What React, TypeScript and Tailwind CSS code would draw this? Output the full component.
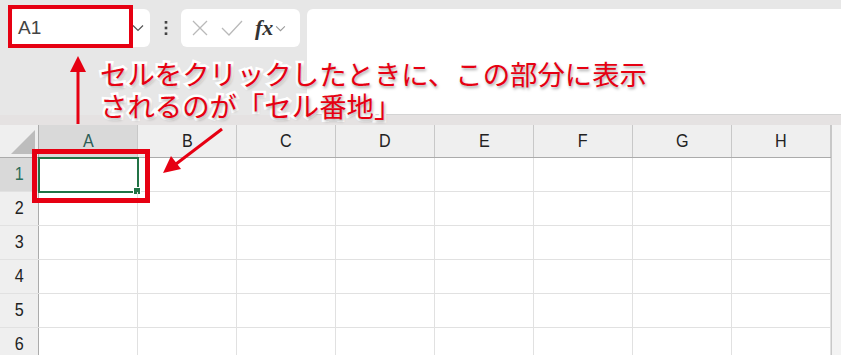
import React from 'react'

const COLS = ['A', 'B', 'C', 'D', 'E', 'F', 'G', 'H']
const ROWS = [1, 2, 3, 4, 5, 6]

function Chevron({ className }: { className?: string }) {
  return (
    <svg viewBox="0 0 12 8" className={className} fill="none" stroke="currentColor" strokeWidth="1.2">
      <path d="M1 1.5 L6 6.5 L11 1.5" />
    </svg>
  )
}

export default function App() {
  return (
    <div className="relative w-[841px] h-[355px] overflow-hidden bg-[#e7e7e7] font-['Noto_Sans_CJK_JP','Liberation_Sans',sans-serif]">
      {/* Formula bar */}
      <div className="flex items-start h-[115px] pt-[9px] pl-[10px]">
        <div className="flex items-center w-[140px] h-[38px] bg-white rounded-md pl-[8px] pr-[6px]">
          <span className="flex-1 text-[19px] text-[#444] font-['Liberation_Sans',sans-serif]">A1</span>
          <Chevron className="w-[12px] h-[8px] text-[#555]" />
        </div>
        <div className="w-[31px] h-[38px] flex items-center justify-center">
          <svg viewBox="0 0 4 16" className="w-[4px] h-[14px] text-[#444]" fill="currentColor">
            <rect x="0.5" y="0" width="3" height="3" />
            <rect x="0.5" y="6.5" width="3" height="3" />
            <rect x="0.5" y="13" width="3" height="3" />
          </svg>
        </div>
        <div className="flex items-center w-[119px] h-[38px] bg-white rounded-md pl-[10px] pr-[6px] gap-[12px]">
          <svg viewBox="0 0 18 18" className="w-[18px] h-[18px] text-[#b9b9b9]" fill="none" stroke="currentColor" strokeWidth="1.3">
            <path d="M2 2 L16 16 M16 2 L2 16" />
          </svg>
          <svg viewBox="0 0 22 18" className="w-[22px] h-[18px] text-[#b9b9b9]" fill="none" stroke="currentColor" strokeWidth="1.3">
            <path d="M1 9 L8 16 L21 2" />
          </svg>
          <span className="text-[22px] italic font-bold text-[#333] font-['Liberation_Serif',serif] leading-none">fx</span>
          <Chevron className="w-[11px] h-[7px] -ml-[10px] text-[#999]" />
        </div>
        <div className="ml-[7px] flex-1 h-[106px] bg-white rounded-l-md border-b border-[#d4d4d4]" />
      </div>

      {/* Band above headers */}
      <div className="h-[10px] bg-[#e5e2e2]" />

      {/* Grid */}
      <div className="flex">
        <div className="w-[831px] bg-white">
          <div className="flex h-[33px] bg-[#efefef] border-b border-[#ababab]">
            <div className="w-[39px] border-r border-[#ababab] flex items-end justify-end p-[3px]">
              <svg viewBox="0 0 24 24" className="w-[24px] h-[24px]">
                <path d="M24 0 L24 24 L0 24 Z" fill="#bdbdbd" />
              </svg>
            </div>
            {COLS.map((c, i) => (
              <div
                key={c}
                className={
                  i === 0
                    ? 'w-[99px] flex items-center justify-center border-r border-[#c8c8c8] bg-[#d9d9d9] text-[19px] text-[#2d5e58] font-["Liberation_Sans",sans-serif]'
                    : 'w-[99px] flex items-center justify-center border-r border-[#c8c8c8] text-[19px] text-[#222] font-["Liberation_Sans",sans-serif]'
                }
              >
                <span className="inline-block scale-x-[0.85]">{c}</span>
              </div>
            ))}
          </div>
          {ROWS.map((r) => (
            <div key={r} className="flex h-[34px] border-b border-[#e1e1e1]">
              <div
                className={
                  r === 1
                    ? 'w-[39px] flex items-center justify-center bg-[#d9d9d9] border-r border-[#ababab] text-[19px] text-[#2d6e5a] font-["Liberation_Sans",sans-serif]'
                    : 'w-[39px] flex items-center justify-center bg-[#efefef] border-r border-[#ababab] text-[19px] text-[#222] font-["Liberation_Sans",sans-serif]'
                }
              >
                <span className="inline-block scale-x-[0.85]">{r}</span>
              </div>
              {COLS.map((c, i) => (
                <div key={c} className="relative w-[99px] border-r border-[#e1e1e1]">
                  {r === 1 && i === 0 && (
                    <div className="absolute -left-[1px] -top-[1px] w-[101px] h-[36px] border-2 border-[#217346]">
                      <div className="absolute -right-[4px] -bottom-[4px] w-[6px] h-[6px] bg-[#217346] border border-white box-content" />
                    </div>
                  )}
                </div>
              ))}
            </div>
          ))}
        </div>
        <div className="flex-1 border-l border-[#c8c8c8] bg-[#f3f3f3]" />
      </div>

      {/* Annotation overlays */}
      <div className="absolute left-[8px] top-[5px] w-[125px] h-[43px] border-4 border-[#e60012]" />
      <div className="absolute left-[32px] top-[149px] w-[118px] h-[54px] border-[5px] border-[#e60012]" />

      <svg className="absolute left-0 top-0 w-[841px] h-[355px] pointer-events-none" viewBox="0 0 841 355">
        <line x1="78" y1="124" x2="78" y2="70" stroke="#e60012" strokeWidth="3" />
        <path d="M78 56 L86 72 L70 72 Z" fill="#e60012" />
        <line x1="222" y1="129" x2="176" y2="164" stroke="#e60012" strokeWidth="3" />
        <path d="M163 173 L171 156 L181 169 Z" fill="#e60012" />
      </svg>

      <div className="absolute left-[100px] top-[57px] text-[27.4px] leading-[32px] text-[#e60012] [-webkit-text-stroke:5px_white] [paint-order:stroke_fill] [text-shadow:1px_2px_3px_rgba(0,0,0,0.35)] whitespace-nowrap">
        <div>セルをクリックしたときに、この部分に表示</div>
        <div>されるのが「セル番地」</div>
      </div>
    </div>
  )
}
